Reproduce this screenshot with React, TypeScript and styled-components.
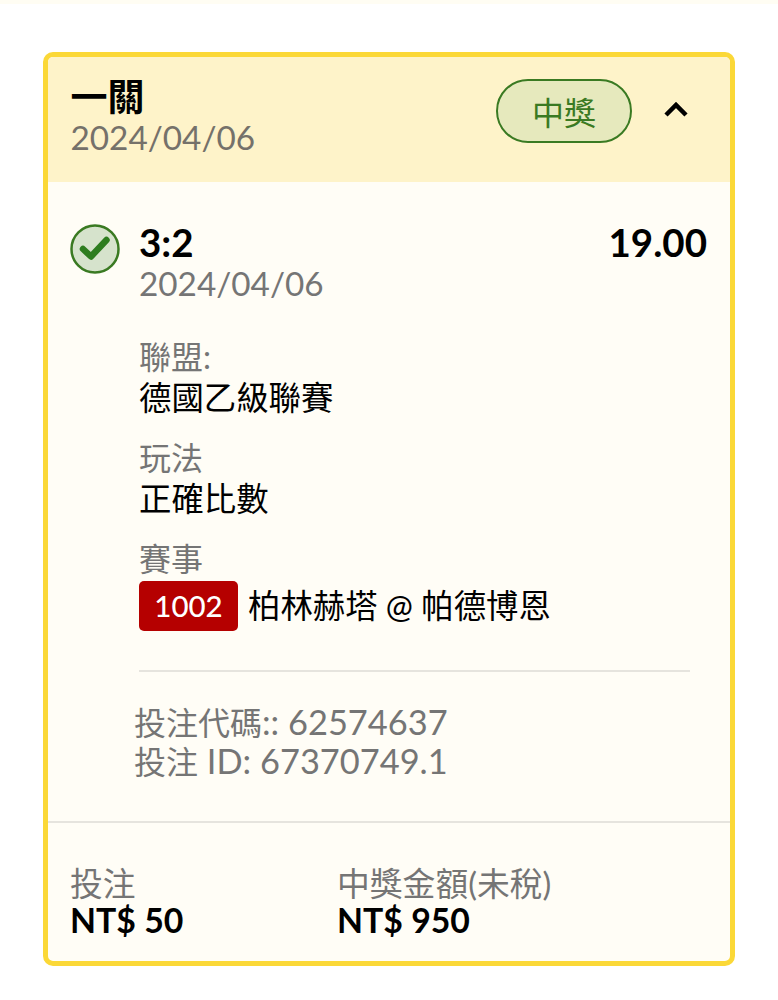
import React from "react";
import styled, { createGlobalStyle } from "styled-components";

const Global = createGlobalStyle`
  html, body { margin: 0; padding: 0; background: #fff; }
  body { font-family: Lato, "Noto Sans CJK TC", sans-serif; }
`;

const Page = styled.div`
  width: 778px;
  height: 1000px;
  box-sizing: border-box;
  padding-top: 52px;
  overflow: hidden;
  position: relative;
`;
const TopStrip = styled.div`
  position: absolute;
  left: 0;
  right: 0;
  top: 0;
  height: 4px;
  background: #fffdf3;
`;
const Card = styled.section`
  margin-left: 43px;
  width: 692px;
  height: 914px;
  box-sizing: border-box;
  border: 5px solid #fbd837;
  border-radius: 10px;
  background: #fffdf6;
  display: flex;
  flex-direction: column;
  overflow: hidden;
`;
const Header = styled.header`
  height: 125px;
  flex: none;
  background: #fef3c9;
  box-sizing: border-box;
  padding: 20px 41px 0 22.5px;
  display: flex;
  justify-content: space-between;
  align-items: flex-start;
`;
const Title = styled.div`
  font-size: 37px;
  line-height: 40px;
  font-weight: 700;
  color: #000;
`;
const DateText = styled.div`
  font-size: 33.3px;
  line-height: 40px;
  color: #75716a;
`;
const HeaderRight = styled.div`
  display: flex;
  align-items: center;
  gap: 31px;
  margin-top: 2px;
`;
const Chevron = styled.svg`
  margin-bottom: 5px;
`;
const Pill = styled.div`
  width: 136px;
  height: 64px;
  box-sizing: border-box;
  border: 2.5px solid #3a7a22;
  border-radius: 32px;
  background: #e6e9bd;
  color: #3a7a22;
  font-size: 32px;
  display: flex;
  align-items: center;
  justify-content: center;
`;
const Main = styled.div`
  flex: 1;
  padding: 40px 23px 0 22px;
  display: flex;
  flex-direction: column;
`;
const Row = styled.div`
  display: flex;
  gap: 19px;
`;
const Status = styled.div`
  flex: none;
  padding-top: 2px;
  line-height: 0;
`;
const Content = styled.div`
  flex: 1;
`;
const TopLine = styled.div`
  display: flex;
  justify-content: space-between;
`;
const Strong = styled.div`
  font-size: 38.5px;
  line-height: 41px;
  font-weight: 700;
  color: #000;
`;
const SubDate = styled(DateText)`
  color: #757575;
`;
const Field = styled.div<{ $top: number }>`
  margin-top: ${(p) => p.$top}px;
`;
const Label = styled.div`
  font-size: 32px;
  line-height: 40px;
  margin-bottom: 1px;
  color: #757575;
`;
const Value = styled.div`
  font-size: 32.4px;
  line-height: 40px;
  color: #000;
  display: flex;
  align-items: center;
  gap: 10px;
`;
const Code = styled.span`
  width: 99px;
  height: 50px;
  margin-top: 1px;
  background: #b50000;
  border-radius: 5px;
  color: #fff;
  font-size: 29.5px;
  font-weight: 500;
  display: flex;
  align-items: center;
  justify-content: center;
`;
const Divider = styled.hr`
  margin: 39px 17px 0 0;
  border: none;
  height: 2px;
  background: #e6e4de;
`;
const Meta = styled.div`
  margin: 31px 0 0 -5px;
  font-size: 34.4px;
  line-height: 38px;
  color: #757575;
`;
const Han = styled.span`
  font-size: 32px;
`;
const Footer = styled.footer`
  flex: none;
  height: 140px;
  box-sizing: border-box;
  border-top: 2px solid #e6e4de;
  padding: 42px 22px 0;
  display: grid;
  grid-template-columns: 267px 1fr;
`;
const FootLabel = styled.div`
  font-size: 32.8px;
  line-height: 37px;
  color: #757575;
`;
const FootValue = styled.div`
  font-size: 33.8px;
  line-height: 36px;
  font-weight: 700;
  color: #000;
`;

export default function App() {
  return (
    <Page>
      <Global />
      <TopStrip />
      <Card>
        <Header>
          <div>
            <Title>一關</Title>
            <DateText>2024/04/06</DateText>
          </div>
          <HeaderRight>
            <Pill>中獎</Pill>
            <Chevron width="26" height="18" viewBox="0 0 26 18" fill="none">
              <path d="M3 15 L13 5 L23 15" stroke="#000" strokeWidth="4.5" />
            </Chevron>
          </HeaderRight>
        </Header>
        <Main>
          <Row>
            <Status>
              <svg width="50" height="50" viewBox="0 0 50 50" fill="none">
                <circle cx="25" cy="25" r="23.5" fill="#d6e3cc" stroke="#3a7a22" strokeWidth="2.5" />
                <path d="M13 25 L21 32.5 L36.5 16" stroke="#2e7d1f" strokeWidth="6.5" strokeLinecap="round" strokeLinejoin="round" />
              </svg>
            </Status>
            <Content>
              <TopLine>
                <Strong>3:2</Strong>
                <Strong>19.00</Strong>
              </TopLine>
              <SubDate>2024/04/06</SubDate>
              <Field $top={34}>
                <Label>聯盟:</Label>
                <Value>德國乙級聯賽</Value>
              </Field>
              <Field $top={20}>
                <Label>玩法</Label>
                <Value>正確比數</Value>
              </Field>
              <Field $top={20}>
                <Label>賽事</Label>
                <Value>
                  <Code>1002</Code>柏林赫塔 @ 帕德博恩
                </Value>
              </Field>
              <Divider />
              <Meta>
                <Han>投注代碼</Han>:: 62574637
                <br />
                <Han>投注</Han> ID: 67370749.1
              </Meta>
            </Content>
          </Row>
        </Main>
        <Footer>
          <div>
            <FootLabel>投注</FootLabel>
            <FootValue>NT$ 50</FootValue>
          </div>
          <div>
            <FootLabel>中獎金額(未稅)</FootLabel>
            <FootValue>NT$ 950</FootValue>
          </div>
        </Footer>
      </Card>
    </Page>
  );
}
